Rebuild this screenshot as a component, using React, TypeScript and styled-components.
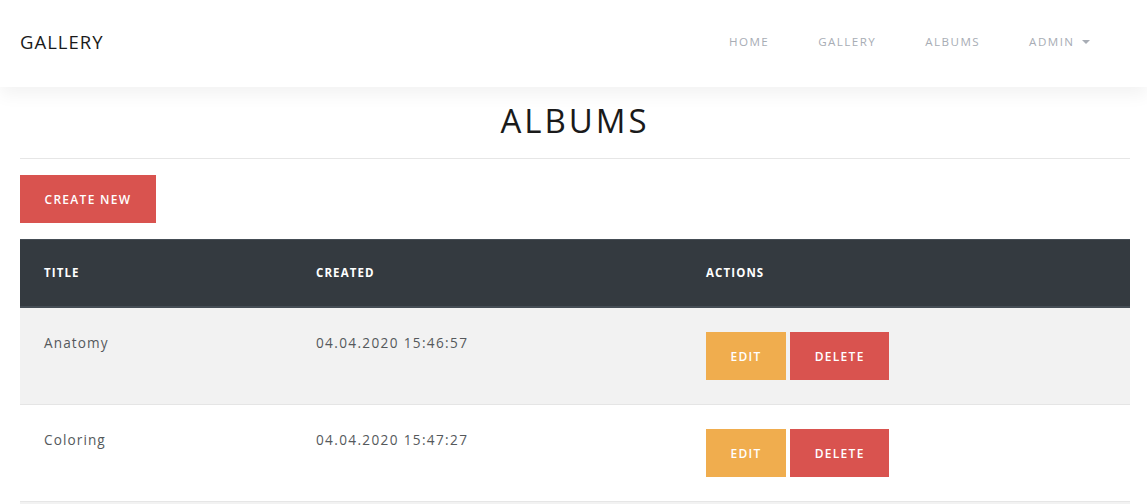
import React from "react";
import styled, { createGlobalStyle } from "styled-components";

const GlobalStyle = createGlobalStyle`
  html, body {
    margin: 0;
    padding: 0;
    background: #ffffff;
  }
  body {
    font-family: "Open Sans", "Noto Sans", "Liberation Sans", sans-serif;
    color: #55595c;
    font-size: 14px;
    overflow: hidden;
  }
  * { box-sizing: border-box; }
`;

const Navbar = styled.nav`
  display: flex;
  align-items: center;
  justify-content: space-between;
  height: 87px;
  padding: 0 33px 4px 20px;
  background: #ffffff;
  box-shadow: 0 0.5rem 1rem rgba(0, 0, 0, 0.05);
  position: relative;
  z-index: 1;
`;

const Brand = styled.a`
  font-size: 18.5px;
  font-weight: 400;
  letter-spacing: 1px;
  color: #1a1a1a;
  text-transform: uppercase;
  text-decoration: none;
`;

const NavList = styled.ul`
  display: flex;
  align-items: center;
  list-style: none;
  margin: 0;
  padding: 0;
`;

const NavLink = styled.a`
  display: flex;
  align-items: center;
  padding: 8px 24.5px;
  font-size: 11.6px;
  letter-spacing: 1.45px;
  text-transform: uppercase;
  color: #a8adb5;
  text-decoration: none;
`;

const Caret = styled.span`
  display: inline-block;
  margin-left: 7px;
  width: 0;
  height: 0;
  border-left: 4px solid transparent;
  border-right: 4px solid transparent;
  border-top: 4px solid #a8adb5;
`;

const Main = styled.main`
  padding: 0 17px 0 20px;
`;

const Title = styled.h1`
  margin: 12px 0 0;
  line-height: 43px;
  text-align: center;
  font-size: 33px;
  font-weight: 400;
  letter-spacing: 3px;
  color: #1a1a1a;
  text-transform: uppercase;
`;

const Rule = styled.hr`
  margin: 16px 0 16px;
  border: 0;
  border-top: 1px solid #e6e6e6;
`;

const Button = styled.button<{ $variant: "danger" | "warning" }>`
  display: inline-flex;
  align-items: center;
  justify-content: center;
  height: 48px;
  padding: 0 24.5px;
  border: 0;
  border-radius: 0;
  background: ${(p) => (p.$variant === "danger" ? "#d9534f" : "#f0ad4e")};
  color: #ffffff;
  font-family: inherit;
  font-size: 12px;
  font-weight: 600;
  letter-spacing: 1.3px;
  text-transform: uppercase;
  cursor: pointer;
`;

const Toolbar = styled.div`
  display: flex;
  margin-bottom: 16px;
`;

const Table = styled.table`
  width: 100%;
  border-collapse: collapse;
  border-bottom: 1px solid #e6e6e6;
`;

const HeadCell = styled.th<{ $width?: string }>`
  width: ${(p) => p.$width || "auto"};
  padding: 24px 24px;
  text-align: left;
  background: #343a40;
  color: #ffffff;
  font-size: 11.5px;
  font-weight: 700;
  line-height: 18px;
  letter-spacing: 1.1px;
  text-transform: uppercase;
  border-top: 1px solid #454d55;
  border-bottom: 2px solid #454d55;
`;

const Row = styled.tr<{ $striped?: boolean }>`
  background: ${(p) => (p.$striped ? "#f2f2f2" : "#ffffff")};
`;

const Cell = styled.td`
  padding: 24px;
  vertical-align: top;
  font-size: 13.6px;
  line-height: 21px;
  letter-spacing: 1.1px;
  color: #55595c;
  border-top: 1px solid rgba(0, 0, 0, 0.05);
`;

const DateCell = styled(Cell)`
  letter-spacing: 1.35px;
`;

const Actions = styled.div`
  display: flex;
  gap: 4px;
`;

const Footer = styled.div`
  height: 40px;
  background: #f2f2f2;
`;

const albums = [
  { title: "Anatomy", created: "04.04.2020 15:46:57" },
  { title: "Coloring", created: "04.04.2020 15:47:27" },
];

export default function App() {
  return (
    <>
      <GlobalStyle />
      <Navbar>
        <Brand href="#">Gallery</Brand>
        <NavList>
          <li><NavLink href="#">Home</NavLink></li>
          <li><NavLink href="#">Gallery</NavLink></li>
          <li><NavLink href="#">Albums</NavLink></li>
          <li>
            <NavLink href="#">
              Admin
              <Caret />
            </NavLink>
          </li>
        </NavList>
      </Navbar>
      <Main>
        <Title>Albums</Title>
        <Rule />
        <Toolbar>
          <Button $variant="danger">Create New</Button>
        </Toolbar>
        <Table>
          <thead>
            <tr>
              <HeadCell $width="272px">Title</HeadCell>
              <HeadCell $width="390px">Created</HeadCell>
              <HeadCell>Actions</HeadCell>
            </tr>
          </thead>
          <tbody>
            {albums.map((a, i) => (
              <Row key={a.title} $striped={i % 2 === 0}>
                <Cell>{a.title}</Cell>
                <DateCell>{a.created}</DateCell>
                <Cell>
                  <Actions>
                    <Button $variant="warning">Edit</Button>
                    <Button $variant="danger">Delete</Button>
                  </Actions>
                </Cell>
              </Row>
            ))}
          </tbody>
        </Table>
        <Footer />
      </Main>
    </>
  );
}
